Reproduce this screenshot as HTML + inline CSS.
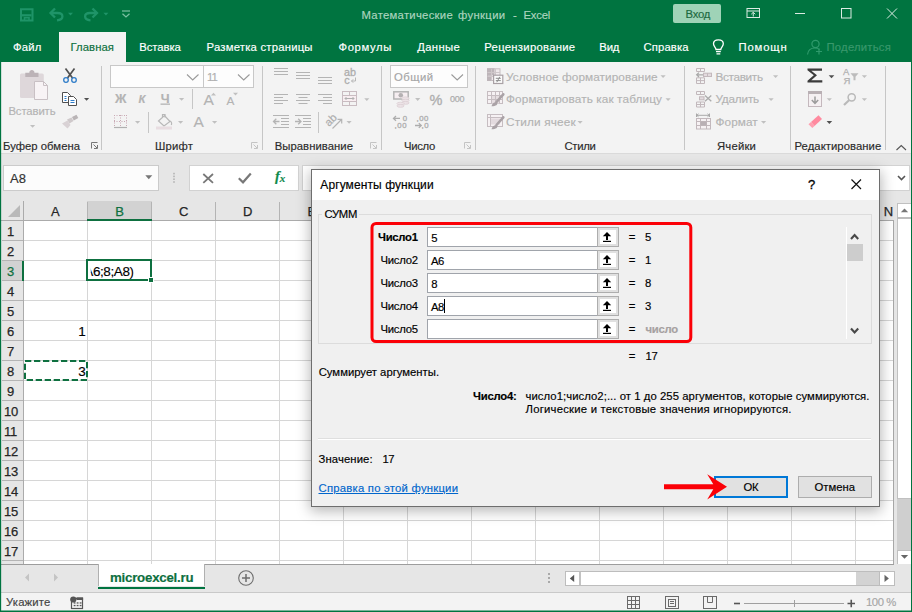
<!DOCTYPE html>
<html lang="ru"><head><meta charset="utf-8"><title>Математические функции - Excel</title>
<style>
html,body{margin:0;padding:0;}
body{width:912px;height:612px;overflow:hidden;position:relative;background:#fff;font-family:"Liberation Sans",sans-serif;}
.a{position:absolute;}
.t{position:absolute;white-space:pre;-webkit-text-stroke:0.16px;}
svg{position:absolute;left:0;top:0;overflow:visible;}
</style></head><body>
<!-- window chrome backgrounds -->
<div class="a" style="left:0;top:0;width:912px;height:62px;background:#007440"></div>
<div class="a" style="left:59px;top:32px;width:67px;height:30px;background:#f3f3f3"></div>
<div class="a" style="left:0;top:62px;width:912px;height:92px;background:#f3f3f3"></div>
<div class="a" style="left:0;top:154px;width:912px;height:47px;background:#e6e6e6"></div>
<div class="a" style="left:0;top:153px;width:912px;height:1px;background:#dadada"></div>
<!-- Вход button -->
<div class="a" style="left:673px;top:4px;width:48px;height:19px;background:#9fd3b7;border-radius:2px"></div>
<!-- ribbon combos -->
<div class="a" style="left:110px;top:65px;width:92px;height:21px;background:#fdfdfd;border:1px solid #c8c8c8"></div>
<div class="a" style="left:203px;top:65px;width:49px;height:21px;background:#fdfdfd;border:1px solid #c8c8c8"></div>
<div class="a" style="left:390px;top:65px;width:76px;height:21px;background:#fdfdfd;border:1px solid #c8c8c8"></div>
<!-- formula bar boxes -->
<div class="a" style="left:3px;top:165px;width:154px;height:24px;background:#fcfcfc;border:1px solid #cbcbcb"></div>
<div class="a" style="left:189px;top:165px;width:108px;height:24px;background:#fff;border:1px solid #d2d2d2"></div>
<div class="a" style="left:302px;top:165px;width:606px;height:24px;background:#fff;border:1px solid #d2d2d2"></div>
<!-- sheet -->
<div class="a" style="left:0;top:201px;width:912px;height:363px;background:#fff"></div>
<div class="a" style="left:0;top:201px;width:894px;height:20px;background:#e6e6e6"></div>
<div class="a" style="left:0;top:221px;width:24px;height:343px;background:#e6e6e6"></div>
<div class="a" style="left:87px;top:201px;width:65px;height:19px;background:#d2d2d2"></div>
<div class="a" style="left:2px;top:261px;width:22px;height:20px;background:#d2d2d2"></div>
<!-- right scrollbar column -->
<div class="a" style="left:894px;top:201px;width:18px;height:363px;background:#e6e6e6"></div>
<div class="a" style="left:897px;top:203px;width:13px;height:294px;background:#fff;border:1px solid #c0c0c0;border-right:0"></div>
<div class="a" style="left:897px;top:217px;width:14px;height:2px;background:#bdbdbd"></div>
<div class="a" style="left:897px;top:499px;width:14px;height:51px;background:#cfcfcf"></div>
<div class="a" style="left:897px;top:550px;width:13px;height:13px;background:#fff;border:1px solid #c0c0c0;border-right:0"></div>
<!-- bottom bars -->
<div class="a" style="left:0;top:564px;width:912px;height:28px;background:#e6e6e6"></div>
<div class="a" style="left:0;top:564px;width:894px;height:1px;background:#9d9d9d"></div>
<div class="a" style="left:98px;top:564px;width:107px;height:22px;background:#fff;border-left:1px solid #b0b0b0;border-right:1px solid #b0b0b0;box-sizing:border-box"></div>
<div class="a" style="left:98px;top:587px;width:107px;height:2px;background:#007440"></div>
<div class="a" style="left:0;top:592px;width:912px;height:20px;background:#f3f3f3"></div>
<div class="a" style="left:0;top:592px;width:912px;height:1px;background:#c9c9c9"></div>
<!-- horizontal scrollbar -->
<div class="a" style="left:565px;top:571px;width:328px;height:13px;background:#fff;border:1px solid #bdbdbd"></div>
<div class="a" style="left:856px;top:572px;width:24px;height:13px;background:#d3d3d3"></div>
<div class="a" style="left:579px;top:572px;width:2px;height:13px;background:#c3c3c3"></div>
<div class="a" style="left:879px;top:572px;width:1px;height:13px;background:#bdbdbd"></div>

<svg width="912" height="612" viewBox="0 0 912 612">
<g stroke="#d6d6d6" stroke-width="1" fill="none"><path d="M87.5 221V564"/><path d="M151.5 221V564"/><path d="M215.5 221V564"/><path d="M279.5 221V564"/><path d="M343.5 221V564"/><path d="M407.5 221V564"/><path d="M471.5 221V564"/><path d="M535.5 221V564"/><path d="M599.5 221V564"/><path d="M663.5 221V564"/><path d="M727.5 221V564"/><path d="M791.5 221V564"/><path d="M855.5 221V564"/><path d="M24 240.5H893"/><path d="M24 260.5H893"/><path d="M24 280.5H893"/><path d="M24 300.5H893"/><path d="M24 320.5H893"/><path d="M24 340.5H893"/><path d="M24 360.5H893"/><path d="M24 380.5H893"/><path d="M24 400.5H893"/><path d="M24 420.5H893"/><path d="M24 440.5H893"/><path d="M24 460.5H893"/><path d="M24 480.5H893"/><path d="M24 500.5H893"/><path d="M24 520.5H893"/><path d="M24 540.5H893"/><path d="M24 560.5H893"/></g>
<g stroke="#b4b4b4" stroke-width="1" fill="none"><path d="M87.5 202V220"/><path d="M151.5 202V220"/><path d="M215.5 202V220"/><path d="M279.5 202V220"/><path d="M343.5 202V220"/><path d="M407.5 202V220"/><path d="M471.5 202V220"/><path d="M535.5 202V220"/><path d="M599.5 202V220"/><path d="M663.5 202V220"/><path d="M727.5 202V220"/><path d="M791.5 202V220"/><path d="M855.5 202V220"/><path d="M2 240.5H24"/><path d="M2 260.5H24"/><path d="M2 280.5H24"/><path d="M2 300.5H24"/><path d="M2 320.5H24"/><path d="M2 340.5H24"/><path d="M2 360.5H24"/><path d="M2 380.5H24"/><path d="M2 400.5H24"/><path d="M2 420.5H24"/><path d="M2 440.5H24"/><path d="M2 460.5H24"/><path d="M2 480.5H24"/><path d="M2 500.5H24"/><path d="M2 520.5H24"/><path d="M2 540.5H24"/><path d="M2 560.5H24"/></g>
<!-- header borders -->
<path d="M0 220.5H894" stroke="#ababab" fill="none"/>
<path d="M23.500 201V564" stroke="#ababab" fill="none"/>
<path d="M893.500 221V564" stroke="#a8a8a8" fill="none"/>
<path d="M8 217H20V205Z" fill="#b9b9b9"/>
<!-- selected col/row marks -->
<rect x="87" y="219" width="65" height="2" fill="#0e7040"/>
<rect x="22" y="261" width="2" height="20" fill="#0e7040"/>
<!-- B3 selection -->
<rect x="87" y="260" width="64" height="20" fill="#fff" stroke="#0e7040" stroke-width="2"/>
<rect x="148.5" y="277.500" width="5" height="5" fill="#0e7040" stroke="#fff" stroke-width="1"/>
<!-- A8 marching ants -->
<rect x="25" y="361" width="62" height="19" fill="none" stroke="#0e7040" stroke-width="2" stroke-dasharray="6.300 2.700"/>
<!-- ===== title bar quick access ===== -->
<g fill="none" stroke="#1f9468" stroke-width="2">
  <path d="M21 9.300H32.500V20.500H21Z"/>
  <path d="M22 15.300H31.500" stroke-width="2.200"/>
  <path d="M24.500 20.500V17.800H29V20.500" stroke-width="1.600"/>
  <path d="M55 8.500L50.500 13L55 17.500" stroke-width="2.300"/>
  <path d="M51 13H57.500C61.300 13 62.400 15 62.400 16.500C62.400 18.600 60.500 20 57 20.300" stroke-width="2.300"/>
  <path d="M92.500 8.500L97 13L92.500 17.500" stroke-width="2.300"/>
  <path d="M96.500 13H90C86.200 13 85.100 15 85.100 16.500C85.100 18.600 87 20 90.500 20.300" stroke-width="2.300"/>
</g>
<path d="M68 12.800H73L70.500 15.600Z" fill="#1f9468"/>
<path d="M103.400 12.800H108.400L105.900 15.600Z" fill="#1f9468"/>
<g fill="none" stroke="#7cc0a2" stroke-width="1.2">
  <path d="M122 11H130"/>
  <path d="M122.500 13.700L126 17L129.500 13.700"/>
</g>
<!-- window controls -->
<g fill="none" stroke="#dcebe3" stroke-width="1">
  <rect x="747" y="8.500" width="12.500" height="9"/>
  <path d="M747 11H759.500" />
  <path d="M753.250 16.500V12.500M751.250 14.200L753.250 12.300L755.250 14.200"/>
  <path d="M795 13.500H805"/>
  <rect x="841.500" y="8.500" width="9.500" height="9.500"/>
  <path d="M887 8.500L897 18.500M897 8.500L887 18.500"/>
</g>
<!-- bulb -->
<g fill="none" stroke="#fff" stroke-width="1.3">
  <path d="M716 49.500C716 47.500 713.500 46.500 713.500 43.800C713.500 41.500 715.500 39.800 718.400 39.800C721.300 39.800 723.300 41.500 723.300 43.800C723.300 46.500 720.800 47.500 720.800 49.500Z"/>
  <path d="M716 51.700H720.800M716.500 53.800H720.300"/>
</g>
<!-- share icon -->
<g fill="none" stroke="#2f9a6c" stroke-width="1.2">
  <circle cx="815.500" cy="44" r="3.600"/>
  <path d="M807.500 54.500C808 50 811.500 48 815 48C817 48 818.500 48.600 819.500 49.500"/>
  <path d="M819 48.500V54.500M816 51.500H822"/>
</g>

<!-- ===== ribbon group separators ===== -->
<g stroke="#c6c6c6" stroke-width="1" fill="none">
  <path d="M101.500 66V150M262.500 66V150M381.500 66V150M475.500 66V150M684.500 66V150M790.500 66V150M885.500 66V150"/>
  <path d="M192.500 89V109M148.500 112V133M318.500 112V133"/>
</g>
<!-- dialog launchers -->
<g stroke="#777" stroke-width="1" fill="none">
  <path d="M91.500 148.500V142.500H97.500M93.500 144.500L97 148M97.500 145V148.500H94"/>
</g>
<g stroke="#c4c4c4" stroke-width="1" fill="none">
  <path d="M251.500 148.500V142.500H257.500M253.500 144.500L257 148M257.500 145V148.500H254"/>
  <path d="M370.500 148.500V142.500H376.500M372.500 144.500L376 148M376.500 145V148.500H373"/>
  <path d="M464.500 148.500V142.500H470.500M466.500 144.500L470 148M470.500 145V148.500H467"/>
</g>
<!-- collapse ribbon caret -->
<path d="M896.500 150L901.250 145.500L906 150" fill="none" stroke="#555" stroke-width="1.1"/>

<!-- ===== clipboard group ===== -->
<rect x="20" y="73.500" width="23.800" height="24.500" rx="1.500" fill="#ded7da"/>
<path d="M25.300 77V72.800H29.300C29.300 69.200 34.500 69.200 34.500 72.800H38.500V77Z" fill="#bcb3b7"/>
<path d="M34.500 81.500H43.500L47.500 85.500V99.500H34.500Z" fill="#f8f3f5" stroke="#c9c0c4" stroke-width="1"/>
<path d="M43.500 81.500V85.500H47.500" fill="none" stroke="#c9c0c4" stroke-width="1"/>
<path d="M30 125H35.200L32.600 127.800Z" fill="#c0c0c0"/>
<!-- scissors -->
<g fill="none">
  <path d="M65.500 68.500L72.500 78M74.500 68.500L67.500 78" stroke="#505050" stroke-width="1.7"/>
  <circle cx="66" cy="80" r="2.300" stroke="#2e7cc8" stroke-width="1.300"/>
  <circle cx="74" cy="80" r="2.300" stroke="#2e7cc8" stroke-width="1.300"/>
</g>
<!-- copy -->
<g fill="#fff" stroke="#505050" stroke-width="1">
  <path d="M62.500 92.500H67.500L70.500 95.500V102.500H62.500Z"/>
  <path d="M68.500 96.500H73.500L76.500 99.500V105.500H68.500Z"/>
</g>
<path d="M64.500 96.500H66.500M64.500 98.500H66.500M64.500 100.500H66.500M70.500 100.500H74.500M70.500 102.500H74.500" stroke="#2e7cc8" stroke-width="1" fill="none"/>
<path d="M84 98H89.200L86.600 100.800Z" fill="#505050"/>
<!-- format painter (disabled) -->
<g>
  <path d="M72 117L76.500 114.800L78.300 118L73.800 120.500Z" fill="#b9b4b6"/>
  <path d="M67 119.500L71.500 117.500L73.500 121L69.500 123.500Z" fill="#cfc9cb"/>
  <path d="M62 123.500L67.500 120.500L70.500 125L67.500 128.500Z" fill="#d9d2d5"/>
</g>

<!-- ===== font group ===== -->
<g fill="none" stroke="#9a9a9a" stroke-width="1.1">
  <path d="M187 74.500L192.700 80L198.500 74.500"/>
  <path d="M238 74.500L243.700 80L249.500 74.500"/>
  <path d="M451.500 74.500L457.200 80L463 74.500"/>
</g>
<g fill="#c0c0c0">
  <path d="M179 98H184.200L181.600 100.800Z"/>
  <path d="M135 121H140.200L137.600 123.800Z"/>
  <path d="M178 121H183.200L180.600 123.800Z"/>
  <path d="M212 121H217.200L214.600 123.800Z"/>
  <path d="M364.200 98.200H369.400L366.800 101Z"/>
  <path d="M346.500 121H351.700L349.100 123.800Z"/>
  <path d="M415.100 98.100H420.300L417.700 100.900Z"/>
  <path d="M660.500 75.300H665.700L663.100 78.100Z"/>
  <path d="M665.500 98.300H670.700L668.100 101.100Z"/>
  <path d="M577.500 121H582.700L580.100 123.800Z"/>
  <path d="M773 75.300H778.200L775.600 78.100Z"/>
  <path d="M768.500 98.300H773.700L771.100 101.100Z"/>
  <path d="M761 121H766.200L763.600 123.800Z"/>
  <path d="M861.800 75.300H867L864.400 78.100Z"/>
  <path d="M861.800 98.200H867L864.400 101Z"/>
  <path d="M826.700 98.200H831.900L829.300 101Z"/>
</g>
<path d="M828.700 75.200H834.300L831.500 78.300Z" fill="#505050"/>
<path d="M826.600 121H832.200L829.400 124.100Z" fill="#505050"/>
<!-- borders icon -->
<g stroke="#c9a9b4" stroke-width="1" stroke-dasharray="1 1.500" fill="none">
  <path d="M114.500 115V127M120.500 115V127M126.500 115V127M114 115.500H127M114 121.500H127"/>
</g>
<path d="M114 127.500H127" stroke="#b0b0b0" stroke-width="1.2"/>
<!-- fill bucket -->
<g fill="none" stroke="#b8b8b8" stroke-width="1.2">
  <path d="M158.500 121L164.500 115.500L170 121.500L164 126Z"/>
  <path d="M162.500 117V114.500H165V117.500"/>
  <path d="M170 121C171.500 121.500 172 123.500 171.300 125"/>
</g>
<rect x="156" y="126.500" width="16" height="3" fill="#e8dde1"/>
<!-- grow / shrink font carets -->
<path d="M211 95.500H216L213.500 92.800Z" fill="#c0c0c0"/>
<path d="M233 92.800H238L235.500 95.500Z" fill="#c0c0c0"/>

<!-- ===== alignment group ===== -->
<g stroke="#b4b4b4" stroke-width="1" fill="none">
  <path d="M274 68.500H288M274 71.500H288M274 74.500H288"/>
  <path d="M296 72.500H310M296 75.500H310M296 78.500H310"/>
  <path d="M318 77.500H332M318 80.500H332M318 83.500H332"/>
  <path d="M274 94.500H288M274 97.500H283M274 100.500H288M274 103.500H283"/>
  <path d="M296 94.500H310M298.500 97.500H307.500M296 100.500H310M298.500 103.500H307.500"/>
  <path d="M318 94.500H332M323 97.500H332M318 100.500H332M323 103.500H332"/>
  <path d="M273 115.500H289M281 118.500H289M281 121.500H289M281 124.500H289M273 127.500H289"/>
  <path d="M295 115.500H311M303 118.500H311M303 121.500H311M303 124.500H311M295 127.500H311"/>
</g>
<g stroke="#b4b4b4" stroke-width="1.3" fill="none">
  <path d="M279.500 121.500H273.500M276.300 118.700L273.500 121.500L276.300 124.300"/>
  <path d="M295 121.500H301M298.200 118.700L301 121.500L298.200 124.300"/>
</g>
<!-- merge icon -->
<rect x="342.500" y="95.500" width="14" height="6" fill="#f8eef1"/>
<g stroke="#c9bcc1" stroke-width="1" fill="none">
  <rect x="342.500" y="91.500" width="14" height="14"/>
  <path d="M342.500 95.500H356.500M342.500 101.500H356.500M349.500 91.500V95.500M349.500 101.500V105.500"/>
  <path d="M345 98.500H354M346.500 97L345 98.500L346.500 100M352.500 97L354 98.500L352.500 100" stroke="#b0b0b0"/>
</g>
<!-- orientation arrow -->
<g stroke="#b4b4b4" stroke-width="1.200" fill="none">
  <path d="M332.500 128.500L341.500 119.500M337.500 119.300H341.700V123.500"/>
</g>

<!-- ===== number group icons ===== -->
<g>
  <rect x="393.800" y="91.800" width="14.400" height="7.200" fill="#f6eef1" stroke="#b4b4b4" stroke-width="1.500"/>
  <circle cx="400.800" cy="95.300" r="2.300" fill="#b4b0b2"/>
  <ellipse cx="405.500" cy="98.300" rx="3.600" ry="1.400" fill="#ece3e6" stroke="#dccfd4" stroke-width=".8"/>
  <ellipse cx="405.500" cy="100.600" rx="3.600" ry="1.400" fill="#ece3e6" stroke="#dccfd4" stroke-width=".8"/>
  <ellipse cx="405.500" cy="102.900" rx="3.600" ry="1.400" fill="#ece3e6" stroke="#dccfd4" stroke-width=".8"/>
  <ellipse cx="400.500" cy="103.600" rx="3.600" ry="1.400" fill="#ece3e6" stroke="#dccfd4" stroke-width=".8"/>
  <ellipse cx="400.500" cy="105.900" rx="3.600" ry="1.400" fill="#ece3e6" stroke="#dccfd4" stroke-width=".8"/>
</g>
<g stroke="#adadad" stroke-width="1.300" fill="none">
  <path d="M400 118.400H393.500M396 116L393.500 118.400L396 120.800"/>
  <path d="M415 125.500H421.300M418.800 123.100L421.300 125.500L418.800 127.900"/>
</g>
<!-- ===== styles group icons ===== -->
<g>
  <rect x="487.500" y="68.800" width="12.500" height="11.700" fill="#f0eaec" stroke="#c6bdc1" stroke-width="1"/>
  <rect x="487" y="68.300" width="7.500" height="7" fill="#bdb5b9"/>
  <rect x="487" y="75.300" width="4.500" height="5.700" fill="#bdb5b9"/>
  <path d="M491.500 69V80.500M495.500 69V80.500M487.500 72.500H500M487.500 76.500H500" stroke="#cfc7ca" stroke-width="1" fill="none"/>
  <rect x="493.600" y="75.200" width="9.200" height="8.300" fill="#fbfbfb" stroke="#a9a1a5" stroke-width="1.200"/>
  <path d="M495.800 78.300H500.800M495.800 80.600H500.800M499.800 76.800L496.800 82.200" stroke="#8e8e8e" stroke-width="1" fill="none"/>
</g>
<g>
  <rect x="487.500" y="91.500" width="15" height="12" fill="#f6f1f3" stroke="#c6bdc1" stroke-width="1"/>
  <rect x="491.500" y="95.500" width="8" height="8" fill="#e6dee1"/>
  <path d="M491.500 91.500V103.500M495.500 91.500V103.500M499.500 91.500V103.500M487.500 95.500H502.500M487.500 99.500H502.500" stroke="#c6bdc1" stroke-width="1" fill="none"/>
  <path d="M503.300 94.300L496.500 102" stroke="#aaa2a6" stroke-width="2.600" fill="none" stroke-linecap="round"/>
  <path d="M491.500 106.300C492.300 102.800 495 101.500 497 102.500C498.300 104.500 496 106.300 491.500 106.300Z" fill="#aaa2a6"/>
</g>
<g>
  <rect x="487.500" y="114.500" width="15" height="12" fill="#f6f1f3" stroke="#c6bdc1" stroke-width="1"/>
  <path d="M487.500 117.500H502.500M490.500 114.500V126.500" stroke="#c6bdc1" stroke-width="1" fill="none"/>
  <rect x="491" y="118.500" width="9" height="6" fill="#e3dade"/>
  <path d="M503.300 117.300L496.500 125" stroke="#aaa2a6" stroke-width="2.600" fill="none" stroke-linecap="round"/>
  <path d="M491.500 129.300C492.300 125.800 495 124.500 497 125.500C498.300 127.500 496 129.300 491.500 129.300Z" fill="#aaa2a6"/>
</g>

<!-- ===== cells group icons ===== -->
<g fill="none" stroke="#c2b8bc" stroke-width="1">
  <path d="M696.500 68.500H704.500V71.500H696.500ZM700.500 68.500V71.500"/>
  <rect x="703.500" y="73.200" width="8" height="3.300" fill="#e3dade"/>
  <path d="M707.500 73.200V76.500"/>
  <path d="M696.500 77.800H704.500V83.500H696.500ZM700.500 77.800V83.500M696.500 80.600H704.500"/>
  <path d="M703 74.800H696.700M699 72.600L696.700 74.800L699 77" stroke="#a9a9a9" stroke-width="1.300"/>
</g>
<g fill="none" stroke="#c2b8bc" stroke-width="1">
  <path d="M696.500 91.500H704.500V94.500H696.500ZM700.500 91.500V94.500"/>
  <rect x="699.500" y="96.800" width="4.500" height="3" fill="#e3dade"/>
  <path d="M696.500 102H704.500V107H696.500ZM700.500 102V107M696.500 104.500H704.500"/>
  <path d="M705 95.500L711.300 101.300M711.300 95.500L705 101.300" stroke="#ababab" stroke-width="1.300"/>
</g>
<g fill="none" stroke="#c2b8bc" stroke-width="1">
  <path d="M696.500 115.300H709.500M696.500 113.500V117M709.500 113.500V117" stroke="#a9a9a9"/>
  <path d="M698.500 113.800L696.800 115.300L698.500 116.800M707.500 113.800L709.200 115.300L707.500 116.800" stroke="#a9a9a9"/>
  <rect x="696.500" y="118.500" width="14" height="10.500" fill="#f6f1f3"/>
  <path d="M696.500 121.500H710.500M696.500 125.500H710.500M700.500 118.500V129M706.500 118.500V129"/>
  <rect x="700.500" y="121.500" width="6" height="4" fill="#b9b0b4" stroke="none"/>
</g>

<!-- ===== editing group icons ===== -->
<path d="M807.500 68.500H822V70.700H811.300L817 75.300L811.300 80.300H822.300V82.500H807.500V80.800L813.800 75.300L807.500 70.200Z" fill="#3b3b3b"/>
<!-- sort & filter funnel -->
<path d="M850.500 73.300H858.500L855.500 76.800V80.300H853.500V76.800Z" fill="#bcbcbc"/>
<!-- fill -->
<g>
  <rect x="808.500" y="91.500" width="13" height="15" fill="#f5f0f2" stroke="#c4b8bd" stroke-width="1"/>
  <rect x="808" y="91" width="14" height="3" fill="#b9b0b4"/>
  <path d="M815 96.500V103M811.800 100L815 103.300L818.200 100" fill="none" stroke="#9c9c9c" stroke-width="1.500"/>
</g>
<!-- find -->
<g fill="none" stroke="#b9b9b9">
  <circle cx="851.700" cy="97.300" r="3.600" stroke-width="1.500"/>
  <path d="M849 100.300L844 105" stroke-width="2.200"/>
</g>
<!-- eraser -->
<g>
  <path d="M811 122L818.500 115.200L822 119L814.500 126Z" fill="#ff8a9f"/>
  <path d="M808.500 124.300L811 122L814.500 126L812.300 128Z" fill="#ff9fb0"/>
</g>

<!-- ===== formula bar icons ===== -->
<path d="M145.300 175.300H152.300L148.800 179.200Z" fill="#777"/>
<g fill="#b4b4b4"><rect x="173.200" y="172.800" width="1.600" height="1.600"/><rect x="173.200" y="175.600" width="1.600" height="1.600"/><rect x="173.200" y="178.400" width="1.600" height="1.600"/><rect x="173.200" y="181.200" width="1.600" height="1.600"/></g>
<path d="M203.300 174L213 182.800M213 174L203.300 182.800" stroke="#787878" stroke-width="1.800" fill="none"/>
<path d="M238.800 178.300L243 182.300L250.800 173.500" stroke="#787878" stroke-width="2.200" fill="none"/>
<path d="M898 176L901.500 179.500L905 176" stroke="#555" stroke-width="1.600" fill="none"/>

<!-- ===== scrollbars / bottom ===== -->
<path d="M900.800 212.200H908.200L904.500 208.400Z" fill="#777"/>
<path d="M900.800 555H908.200L904.500 558.800Z" fill="#666"/>
<path d="M574.200 574.800V582L569.800 578.400Z" fill="#555"/>
<path d="M884.500 574.800V582L888.900 578.400Z" fill="#666"/>
<g fill="#a9a9a9"><rect x="548" y="573" width="2" height="2"/><rect x="548" y="577" width="2" height="2"/><rect x="548" y="581" width="2" height="2"/></g>
<path d="M29 573.500V581.500L25 577.500Z" fill="#c4c4c4"/>
<path d="M54 573.500V581.500L58 577.500Z" fill="#c4c4c4"/>
<g fill="none" stroke="#6e6e6e">
  <circle cx="246" cy="578" r="7.300" stroke-width="1.100"/>
  <path d="M242 578H250M246 574V582" stroke-width="1.500"/>
</g>
<!-- status icons -->
<g>
  <rect x="71.500" y="598.500" width="11" height="10" fill="#f3f3f3" stroke="#555" stroke-width="1.200"/>
  <rect x="76.500" y="597.300" width="6.600" height="2.700" fill="#555"/>
  <circle cx="73.300" cy="599.500" r="3.100" fill="#555"/>
  <g fill="#555"><rect x="73.700" y="602.300" width="1.800" height="1.300"/><rect x="76.700" y="602.300" width="1.800" height="1.300"/><rect x="79.700" y="602.300" width="1.800" height="1.300"/>
  <rect x="73.700" y="604.900" width="1.800" height="1.300"/><rect x="76.700" y="604.900" width="1.800" height="1.300"/><rect x="79.700" y="604.900" width="1.800" height="1.300"/></g>
</g>
<g fill="none" stroke="#6a6a6a" stroke-width="1">
  <rect x="627.500" y="596.500" width="12" height="12"/>
  <path d="M631.500 596.500V608.500M635.500 596.500V608.500M627.500 600.500H639.500M627.500 604.500H639.500"/>
  <rect x="665.500" y="596.500" width="13" height="12"/>
  <rect x="668.500" y="599.500" width="7" height="7"/>
  <path d="M670 601.500H674M670 603.500H674"/>
  <rect x="703.500" y="596.500" width="13" height="12"/>
  <path d="M707.500 596.500V602.500H712.500V596.500"/>
</g>
<path d="M734 603.500H740" stroke="#555" stroke-width="1.600"/>
<path d="M744 603.500H844" stroke="#a0a0a0" stroke-width="1"/>
<path d="M794.500 600V607" stroke="#a0a0a0" stroke-width="1"/>
<path d="M847.500 603.500H855M851.250 599.700V607.300" stroke="#555" stroke-width="1.600"/>
<rect x="160.500" y="103.500" width="9.500" height="1.300" fill="#b3b3b3"/>
<path d="M355.500 77.500V81H351.500M353.200 79.300L351.500 81L353.200 82.700" stroke="#b6b6b6" stroke-width="1" fill="none"/>

</svg>
<span id="t0" class="t" style="left:361.5px;top:8.01px;font-size:11.3px;line-height:15px;color:#acd4bf;letter-spacing:0.282px;">Математические</span>
<span id="t1" class="t" style="left:458px;top:8.01px;font-size:11.3px;line-height:15px;color:#acd4bf;letter-spacing:0.344px;">функции</span>
<span id="t2" class="t" style="left:513px;top:8.01px;font-size:11.3px;line-height:15px;color:#acd4bf;letter-spacing:-0.266px;">-</span>
<span id="t3" class="t" style="left:523.5px;top:8.01px;font-size:11.3px;line-height:15px;color:#acd4bf;letter-spacing:-0.225px;">Excel</span>
<span id="t4" class="t" style="left:685.5px;top:7.01px;font-size:11.3px;line-height:15px;color:#1d6a40;letter-spacing:-0.266px;">Вход</span>
<span id="t5" class="t" style="left:13px;top:40.01px;font-size:11.3px;line-height:15px;color:#fff;letter-spacing:0.180px;">Файл</span>
<span id="t6" class="t" style="left:70.5px;top:40.01px;font-size:11.3px;line-height:15px;color:#0e7040;letter-spacing:0.071px;">Главная</span>
<span id="t7" class="t" style="left:139.3px;top:40.01px;font-size:11.3px;line-height:15px;color:#fff;letter-spacing:-0.086px;">Вставка</span>
<span id="t8" class="t" style="left:206.5px;top:40.01px;font-size:11.3px;line-height:15px;color:#fff;letter-spacing:0.219px;">Разметка страницы</span>
<span id="t9" class="t" style="left:338.5px;top:40.01px;font-size:11.3px;line-height:15px;color:#fff;letter-spacing:0.618px;">Формулы</span>
<span id="t10" class="t" style="left:417.3px;top:40.01px;font-size:11.3px;line-height:15px;color:#fff;letter-spacing:0.312px;">Данные</span>
<span id="t11" class="t" style="left:484.3px;top:40.01px;font-size:11.3px;line-height:15px;color:#fff;letter-spacing:0.276px;">Рецензирование</span>
<span id="t12" class="t" style="left:599.3px;top:40.01px;font-size:11.3px;line-height:15px;color:#fff;letter-spacing:-0.179px;">Вид</span>
<span id="t13" class="t" style="left:643.5px;top:40.01px;font-size:11.3px;line-height:15px;color:#fff;letter-spacing:0.125px;">Справка</span>
<span id="t14" class="t" style="left:738.5px;top:40.01px;font-size:11.3px;line-height:15px;color:#fff;letter-spacing:0.833px;">Помощн</span>
<span id="t15" class="t" style="left:826.5px;top:40.01px;font-size:11.3px;line-height:15px;color:#39986c;letter-spacing:0.211px;">Поделиться</span>
<span id="t16" class="t" style="left:8.4px;top:104.01px;font-size:11.3px;line-height:15px;color:#b3b3b3;letter-spacing:-0.099px;">Вставить</span>
<span id="t17" class="t" style="left:3px;top:139.02px;font-size:11.3px;line-height:15px;color:#2b2b2b;letter-spacing:0.020px;">Буфер обмена</span>
<span id="t18" class="t" style="left:155px;top:139.02px;font-size:11.3px;line-height:15px;color:#2b2b2b;letter-spacing:0.166px;">Шрифт</span>
<span id="t19" class="t" style="left:274.7px;top:139.02px;font-size:11.3px;line-height:15px;color:#2b2b2b;letter-spacing:0.045px;">Выравнивание</span>
<span id="t20" class="t" style="left:404px;top:139.02px;font-size:11.3px;line-height:15px;color:#2b2b2b;letter-spacing:-0.300px;">Число</span>
<span id="t21" class="t" style="left:564.5px;top:139.02px;font-size:11.3px;line-height:15px;color:#2b2b2b;letter-spacing:-0.309px;">Стили</span>
<span id="t22" class="t" style="left:717px;top:139.02px;font-size:11.3px;line-height:15px;color:#2b2b2b;letter-spacing:0.185px;">Ячейки</span>
<span id="t23" class="t" style="left:794.5px;top:139.02px;font-size:11.3px;line-height:15px;color:#2b2b2b;letter-spacing:0.053px;">Редактирование</span>
<span id="t24" class="t" style="left:207px;top:70.01px;font-size:11.3px;line-height:15px;color:#b0b0b0;letter-spacing:-0.867px;">11</span>
<span id="t25" class="t" style="left:394px;top:70.01px;font-size:11.3px;line-height:15px;color:#a6a6a6;letter-spacing:0.463px;">Общий</span>
<span id="t26" class="t" style="left:115px;top:91.01px;font-size:12.6px;line-height:16px;color:#b3b3b3;font-weight:700;letter-spacing:0.609px;">Ж</span>
<span id="t27" class="t" style="left:138.5px;top:92.01px;font-size:11.3px;line-height:15px;color:#b3b3b3;font-weight:700;font-style:italic;letter-spacing:0.547px;">К</span>
<span id="t28" class="t" style="left:160.8px;top:91.01px;font-size:12.6px;line-height:16px;color:#b3b3b3;font-weight:700;letter-spacing:0.041px;">Ч</span>
<span id="t29" class="t" style="left:429.4px;top:91.01px;font-size:14.5px;line-height:19px;color:#afafaf;letter-spacing:-0.406px;-webkit-text-stroke:0.35px;">%</span>
<span id="t30" class="t" style="left:450px;top:93.01px;font-size:9px;line-height:12px;color:#adadad;letter-spacing:-0.244px;-webkit-text-stroke:0.25px;">000</span>
<span id="t31" class="t" style="left:506px;top:70.01px;font-size:11.8px;line-height:15px;color:#b3b3b3;letter-spacing:0.071px;">Условное форматирование</span>
<span id="t32" class="t" style="left:506px;top:92.01px;font-size:11.8px;line-height:15px;color:#b3b3b3;letter-spacing:0.100px;">Форматировать как таблицу</span>
<span id="t33" class="t" style="left:506px;top:115.01px;font-size:11.8px;line-height:15px;color:#b3b3b3;letter-spacing:0.146px;">Стили ячеек</span>
<span id="t34" class="t" style="left:715.5px;top:70.01px;font-size:11.8px;line-height:15px;color:#b3b3b3;letter-spacing:-0.352px;">Вставить</span>
<span id="t35" class="t" style="left:715.5px;top:92.01px;font-size:11.8px;line-height:15px;color:#b3b3b3;letter-spacing:-0.221px;">Удалить</span>
<span id="t36" class="t" style="left:715.5px;top:115.01px;font-size:11.8px;line-height:15px;color:#b3b3b3;letter-spacing:0.049px;">Формат</span>
<span id="t37" class="t" style="left:203.6px;top:90.00px;font-size:15.5px;line-height:20px;color:#b3b3b3;letter-spacing:-0.444px;">A</span>
<span id="t38" class="t" style="left:226.5px;top:94.01px;font-size:11.8px;line-height:15px;color:#b3b3b3;letter-spacing:0.125px;">A</span>
<span id="t39" class="t" style="left:193.5px;top:112.00px;font-size:15.5px;line-height:20px;color:#b3b3b3;letter-spacing:-0.544px;">A</span>
<span id="t40" class="t" style="left:344px;top:65.01px;font-size:10.8px;line-height:14px;color:#adadad;letter-spacing:-0.008px;-webkit-text-stroke:0.3px;">ab</span>
<span id="t41" class="t" style="left:344.3px;top:73.01px;font-size:10.8px;line-height:14px;color:#adadad;letter-spacing:-0.006px;-webkit-text-stroke:0.3px;">c</span>
<span id="t42" class="t" style="left:330.5px;top:115.00px;font-size:11px;line-height:14px;color:#adadad;transform:rotate(-45deg);transform-origin:0 100%;-webkit-text-stroke:0.2px;">ab</span>
<span id="t43" class="t" style="left:843px;top:66.01px;font-size:9.5px;line-height:12px;color:#b0b0b0;letter-spacing:0.456px;-webkit-text-stroke:0.25px;">А</span>
<span id="t44" class="t" style="left:843.5px;top:75.01px;font-size:9.5px;line-height:12px;color:#b0b0b0;letter-spacing:-0.875px;-webkit-text-stroke:0.25px;">Я</span>
<span id="t45" class="t" style="left:402.8px;top:114.00px;font-size:7.8px;line-height:10px;color:#adadad;letter-spacing:0.256px;-webkit-text-stroke:0.3px;">0</span>
<span id="t46" class="t" style="left:394.5px;top:121.00px;font-size:7.8px;line-height:10px;color:#adadad;letter-spacing:0.685px;-webkit-text-stroke:0.3px;">,00</span>
<span id="t47" class="t" style="left:416.5px;top:114.00px;font-size:7.8px;line-height:10px;color:#adadad;letter-spacing:0.552px;-webkit-text-stroke:0.3px;">,00</span>
<span id="t48" class="t" style="left:421.5px;top:121.00px;font-size:7.8px;line-height:10px;color:#adadad;letter-spacing:0.492px;-webkit-text-stroke:0.3px;">,0</span>
<span id="t49" class="t" style="left:10px;top:170.00px;font-size:13px;line-height:17px;color:#333;letter-spacing:0.047px;">A8</span>
<span id="t50" class="t" style="left:275px;top:167.01px;font-size:14.5px;line-height:19px;color:#0f8a4c;font-weight:700;font-style:italic;font-family:'Liberation Serif', serif;">f</span>
<span id="t51" class="t" style="left:279.8px;top:171.00px;font-size:11px;line-height:14px;color:#0f8a4c;font-weight:700;font-style:italic;font-family:'Liberation Serif', serif;">x</span>
<span id="t52" class="t" style="left:51.0px;top:203.00px;font-size:13px;line-height:17px;color:#262626;-webkit-text-stroke:0.25px;">A</span>
<span id="t53" class="t" style="left:179.0px;top:203.00px;font-size:13px;line-height:17px;color:#262626;-webkit-text-stroke:0.25px;">C</span>
<span id="t54" class="t" style="left:243.0px;top:203.00px;font-size:13px;line-height:17px;color:#262626;-webkit-text-stroke:0.25px;">D</span>
<span id="t55" class="t" style="left:115.2px;top:203.00px;font-size:13px;line-height:17px;color:#0e7040;-webkit-text-stroke:0.25px;">B</span>
<span id="t56" class="t" style="left:307.5px;top:203.00px;font-size:13px;line-height:17px;color:#262626;-webkit-text-stroke:0.25px;">E</span>
<span id="t57" class="t" style="left:883.8px;top:203.00px;font-size:13px;line-height:17px;color:#262626;-webkit-text-stroke:0.25px;">N</span>
<span id="t58" class="t" style="left:6.984999999999999px;top:223.00px;font-size:13px;line-height:17px;color:#262626;-webkit-text-stroke:0.25px;">1</span>
<span id="t59" class="t" style="left:6.984999999999999px;top:243.00px;font-size:13px;line-height:17px;color:#262626;-webkit-text-stroke:0.25px;">2</span>
<span id="t60" class="t" style="left:6.984999999999999px;top:263.00px;font-size:13px;line-height:17px;color:#0e7040;-webkit-text-stroke:0.25px;">3</span>
<span id="t61" class="t" style="left:6.984999999999999px;top:283.00px;font-size:13px;line-height:17px;color:#262626;-webkit-text-stroke:0.25px;">4</span>
<span id="t62" class="t" style="left:6.984999999999999px;top:303.00px;font-size:13px;line-height:17px;color:#262626;-webkit-text-stroke:0.25px;">5</span>
<span id="t63" class="t" style="left:6.984999999999999px;top:323.00px;font-size:13px;line-height:17px;color:#262626;-webkit-text-stroke:0.25px;">6</span>
<span id="t64" class="t" style="left:6.984999999999999px;top:343.00px;font-size:13px;line-height:17px;color:#262626;-webkit-text-stroke:0.25px;">7</span>
<span id="t65" class="t" style="left:6.984999999999999px;top:363.00px;font-size:13px;line-height:17px;color:#262626;-webkit-text-stroke:0.25px;">8</span>
<span id="t66" class="t" style="left:6.984999999999999px;top:383.00px;font-size:13px;line-height:17px;color:#262626;-webkit-text-stroke:0.25px;">9</span>
<span id="t67" class="t" style="left:4.069999999999999px;top:403.00px;font-size:13px;line-height:17px;color:#262626;-webkit-text-stroke:0.25px;letter-spacing:-0.4px;">10</span>
<span id="t68" class="t" style="left:4.069999999999999px;top:423.00px;font-size:13px;line-height:17px;color:#262626;-webkit-text-stroke:0.25px;letter-spacing:-0.4px;">11</span>
<span id="t69" class="t" style="left:4.069999999999999px;top:443.00px;font-size:13px;line-height:17px;color:#262626;-webkit-text-stroke:0.25px;letter-spacing:-0.4px;">12</span>
<span id="t70" class="t" style="left:4.069999999999999px;top:463.00px;font-size:13px;line-height:17px;color:#262626;-webkit-text-stroke:0.25px;letter-spacing:-0.4px;">13</span>
<span id="t71" class="t" style="left:4.069999999999999px;top:483.00px;font-size:13px;line-height:17px;color:#262626;-webkit-text-stroke:0.25px;letter-spacing:-0.4px;">14</span>
<span id="t72" class="t" style="left:4.069999999999999px;top:503.00px;font-size:13px;line-height:17px;color:#262626;-webkit-text-stroke:0.25px;letter-spacing:-0.4px;">15</span>
<span id="t73" class="t" style="left:4.069999999999999px;top:523.00px;font-size:13px;line-height:17px;color:#262626;-webkit-text-stroke:0.25px;letter-spacing:-0.4px;">16</span>
<span id="t74" class="t" style="left:4.069999999999999px;top:543.00px;font-size:13px;line-height:17px;color:#262626;-webkit-text-stroke:0.25px;letter-spacing:-0.4px;">17</span>
<span id="t75" class="t" style="left:84.3px;top:263.01px;font-size:13.5px;line-height:18px;color:#000;letter-spacing:-0.404px;clip-path:inset(0 0 0 6.5px);">A6;8;A8)</span>
<span id="t76" class="t" style="left:78.3px;top:323.01px;font-size:13.5px;line-height:18px;color:#000;">1</span>
<span id="t77" class="t" style="left:78.3px;top:363.01px;font-size:13.5px;line-height:18px;color:#000;">3</span>
<span id="t78" class="t" style="left:110px;top:569.02px;font-size:13.3px;line-height:17px;color:#0e7040;font-weight:700;letter-spacing:-0.245px;">microexcel.ru</span>
<span id="t79" class="t" style="left:6px;top:595.01px;font-size:11.3px;line-height:15px;color:#444;letter-spacing:0.137px;">Укажите</span>
<span id="t80" class="t" style="left:866px;top:595.01px;font-size:11.3px;line-height:15px;color:#a6a6a6;letter-spacing:-0.409px;">100 %</span>
<!-- window borders -->
<div class="a" style="left:0;top:62px;width:1px;height:550px;background:#007440"></div>
<div class="a" style="left:1px;top:62px;width:1px;height:550px;background:#007440;opacity:.15"></div>
<div class="a" style="left:911px;top:62px;width:1px;height:550px;background:#007440"></div>
<div class="a" style="left:0;top:611px;width:912px;height:1px;background:#007440"></div>
<div class="a" style="left:0;top:610px;width:912px;height:1px;background:#007440;opacity:.5"></div>

<!-- ================= DIALOG ================= -->
<div class="a" style="left:311px;top:169px;width:569px;height:338px;box-sizing:border-box;border:1px solid #6e6e6e;background:#f0f0f0;box-shadow:0 3px 13px 1px rgba(0,0,0,.29)"></div>
<div class="a" style="left:312px;top:170px;width:567px;height:30px;background:#fff"></div>
<!-- group box -->
<div class="a" style="left:318px;top:214px;width:554px;height:130px;box-sizing:border-box;border:1px solid #dcdcdc"></div>
<div class="a" style="left:322px;top:210px;width:37px;height:9px;background:#f0f0f0"></div>
<div class="a" style="left:427px;top:227px;width:171px;height:20px;box-sizing:border-box;border:1px solid #a0a4ab;background:#fff"></div>
<div class="a" style="left:597px;top:227px;width:22px;height:20px;box-sizing:border-box;border:1px solid #adadad;background:#fff;box-shadow:inset 0 0 0 2px #e0e0e0"></div>
<div class="a" style="left:427px;top:250px;width:171px;height:20px;box-sizing:border-box;border:1px solid #a0a4ab;background:#fff"></div>
<div class="a" style="left:597px;top:250px;width:22px;height:20px;box-sizing:border-box;border:1px solid #adadad;background:#fff;box-shadow:inset 0 0 0 2px #e0e0e0"></div>
<div class="a" style="left:427px;top:273px;width:171px;height:20px;box-sizing:border-box;border:1px solid #a0a4ab;background:#fff"></div>
<div class="a" style="left:597px;top:273px;width:22px;height:20px;box-sizing:border-box;border:1px solid #adadad;background:#fff;box-shadow:inset 0 0 0 2px #e0e0e0"></div>
<div class="a" style="left:427px;top:296px;width:171px;height:20px;box-sizing:border-box;border:1px solid #a0a4ab;background:#fff"></div>
<div class="a" style="left:597px;top:296px;width:22px;height:20px;box-sizing:border-box;border:1px solid #adadad;background:#fff;box-shadow:inset 0 0 0 2px #e0e0e0"></div>
<div class="a" style="left:427px;top:319px;width:171px;height:20px;box-sizing:border-box;border:1px solid #a0a4ab;background:#fff"></div>
<div class="a" style="left:597px;top:319px;width:22px;height:20px;box-sizing:border-box;border:1px solid #adadad;background:#fff;box-shadow:inset 0 0 0 2px #e0e0e0"></div>
<div class="a" style="left:318px;top:438px;width:553px;height:1px;background:#dfdfdf"></div>
<div class="a" style="left:318px;top:439px;width:553px;height:1px;background:#fff"></div>
<!-- buttons -->
<div class="a" style="left:714px;top:476px;width:74px;height:22px;box-sizing:border-box;border:2px solid #0078d7;background:#e1e1e1"></div>
<div class="a" style="left:798px;top:476px;width:74px;height:22px;box-sizing:border-box;border:1px solid #adadad;background:#e1e1e1"></div>
<svg width="912" height="612" viewBox="0 0 912 612">
<rect x="372" y="223.500" width="318.800" height="118" rx="4" ry="4" fill="none" stroke="#fb0007" stroke-width="3"/>
<path d="M607 232L611.2 236.3H608V240H606V236.3H602.8Z" fill="#000"/><rect x="603" y="240.8" width="8" height="1.200" fill="#000"/>
<path d="M607 255L611.2 259.3H608V263H606V259.3H602.8Z" fill="#000"/><rect x="603" y="263.8" width="8" height="1.200" fill="#000"/>
<path d="M607 278L611.2 282.3H608V286H606V282.3H602.8Z" fill="#000"/><rect x="603" y="286.8" width="8" height="1.200" fill="#000"/>
<path d="M607 301L611.2 305.3H608V309H606V305.3H602.8Z" fill="#000"/><rect x="603" y="309.8" width="8" height="1.200" fill="#000"/>
<path d="M607 324L611.2 328.3H608V332H606V328.3H602.8Z" fill="#000"/><rect x="603" y="332.8" width="8" height="1.200" fill="#000"/>
<rect x="444" y="299" width="1" height="14" fill="#000"/>
<rect x="846" y="227" width="1" height="112" fill="#fff"/>
<rect x="847" y="244" width="16" height="17" fill="#cdcdcd"/>
<path d="M851 239L854.600 235L858.200 239" fill="none" stroke="#484848" stroke-width="2.100"/>
<path d="M851 328.500L854.600 332.500L858.200 328.500" fill="none" stroke="#484848" stroke-width="2.100"/>
<path d="M851.5 179.500L861 189M861 179.500L851.500 189" stroke="#111" stroke-width="1.2" fill="none"/>
<path d="M664 484.300H713.300L707.200 474.200L727 486.700L707.200 499.600L713.300 489.300H664Z" fill="#fb0007"/>
</svg>
<span id="t81" class="t" style="left:320.3px;top:177.01px;font-size:12.01px;line-height:16px;color:#000;letter-spacing:0.092px;">Аргументы функции</span>
<span id="t82" class="t" style="left:324.5px;top:207.02px;font-size:11.3px;line-height:15px;color:#000;letter-spacing:-0.320px;">СУММ</span>
<span id="t83" class="t" style="left:378px;top:230.01px;font-size:11.3px;line-height:15px;color:#000;font-weight:700;letter-spacing:-0.282px;">Число1</span>
<span id="t84" class="t" style="left:628.7px;top:230.01px;font-size:11.3px;line-height:15px;color:#000;letter-spacing:-0.009px;">=</span>
<span id="t85" class="t" style="left:380.5px;top:253.01px;font-size:11.3px;line-height:15px;color:#000;letter-spacing:-0.264px;">Число2</span>
<span id="t86" class="t" style="left:628.7px;top:253.01px;font-size:11.3px;line-height:15px;color:#000;letter-spacing:-0.009px;">=</span>
<span id="t87" class="t" style="left:380.5px;top:276.01px;font-size:11.3px;line-height:15px;color:#000;letter-spacing:-0.264px;">Число3</span>
<span id="t88" class="t" style="left:628.7px;top:276.01px;font-size:11.3px;line-height:15px;color:#000;letter-spacing:-0.009px;">=</span>
<span id="t89" class="t" style="left:380.5px;top:299.01px;font-size:11.3px;line-height:15px;color:#000;letter-spacing:-0.264px;">Число4</span>
<span id="t90" class="t" style="left:628.7px;top:299.01px;font-size:11.3px;line-height:15px;color:#000;letter-spacing:-0.009px;">=</span>
<span id="t91" class="t" style="left:380.5px;top:322.01px;font-size:11.3px;line-height:15px;color:#000;letter-spacing:-0.264px;">Число5</span>
<span id="t92" class="t" style="left:628.7px;top:322.01px;font-size:11.3px;line-height:15px;color:#000;letter-spacing:-0.009px;">=</span>
<span id="t93" class="t" style="left:431.3px;top:231.01px;font-size:11.3px;line-height:15px;color:#000;letter-spacing:-0.297px;">5</span>
<span id="t94" class="t" style="left:431px;top:254.01px;font-size:11.3px;line-height:15px;color:#000;letter-spacing:-0.414px;">A6</span>
<span id="t95" class="t" style="left:431.3px;top:277.01px;font-size:11.3px;line-height:15px;color:#000;letter-spacing:-0.297px;">8</span>
<span id="t96" class="t" style="left:431px;top:300.01px;font-size:11.3px;line-height:15px;color:#000;letter-spacing:-0.414px;">A8</span>
<span id="t97" class="t" style="left:645px;top:230.01px;font-size:11.3px;line-height:15px;color:#000;letter-spacing:-0.097px;">5</span>
<span id="t98" class="t" style="left:645px;top:253.01px;font-size:11.3px;line-height:15px;color:#000;letter-spacing:-0.097px;">1</span>
<span id="t99" class="t" style="left:645px;top:276.01px;font-size:11.3px;line-height:15px;color:#000;letter-spacing:-0.097px;">8</span>
<span id="t100" class="t" style="left:645px;top:299.01px;font-size:11.3px;line-height:15px;color:#000;letter-spacing:-0.097px;">3</span>
<span id="t101" class="t" style="left:645.5px;top:322.01px;font-size:11.3px;line-height:15px;color:#a6a1a1;font-weight:700;letter-spacing:-0.264px;">число</span>
<span id="t102" class="t" style="left:628.7px;top:349.02px;font-size:11.3px;line-height:15px;color:#000;letter-spacing:-0.009px;">=</span>
<span id="t103" class="t" style="left:645.5px;top:349.02px;font-size:11.3px;line-height:15px;color:#000;letter-spacing:-0.389px;">17</span>
<span id="t104" class="t" style="left:318.7px;top:365.01px;font-size:11.3px;line-height:15px;color:#000;">Суммирует аргументы.</span>
<span id="t105" class="t" style="left:473px;top:389.01px;font-size:11.3px;line-height:15px;color:#000;font-weight:700;letter-spacing:-0.234px;">Число4:</span>
<span id="t106" class="t" style="left:525.5px;top:389.01px;font-size:11.3px;line-height:15px;color:#000;letter-spacing:0.061px;">число1;число2;... от 1 до 255 аргументов, которые суммируются.</span>
<span id="t107" class="t" style="left:525.5px;top:402.01px;font-size:11.3px;line-height:15px;color:#000;letter-spacing:0.228px;">Логические и текстовые значения игнорируются.</span>
<span id="t108" class="t" style="left:318.5px;top:452.02px;font-size:11.3px;line-height:15px;color:#000;letter-spacing:0.106px;">Значение:</span>
<span id="t109" class="t" style="left:382.5px;top:452.02px;font-size:11.3px;line-height:15px;color:#000;letter-spacing:-0.539px;">17</span>
<span id="t110" class="t" style="left:318.5px;top:481.01px;font-size:11.3px;line-height:15px;color:#0066cc;letter-spacing:0.231px;text-decoration:underline;text-underline-offset:1px;">Справка по этой функции</span>
<span id="t111" class="t" style="left:743.4px;top:480.01px;font-size:11.3px;line-height:15px;color:#000;letter-spacing:-0.287px;">ОК</span>
<span id="t112" class="t" style="left:814.5px;top:480.01px;font-size:11.3px;line-height:15px;color:#000;letter-spacing:-0.008px;">Отмена</span>
<span id="t113" class="t" style="left:808px;top:176.00px;font-size:13px;line-height:17px;color:#000;-webkit-text-stroke:0.3px;">?</span>
</body></html>
